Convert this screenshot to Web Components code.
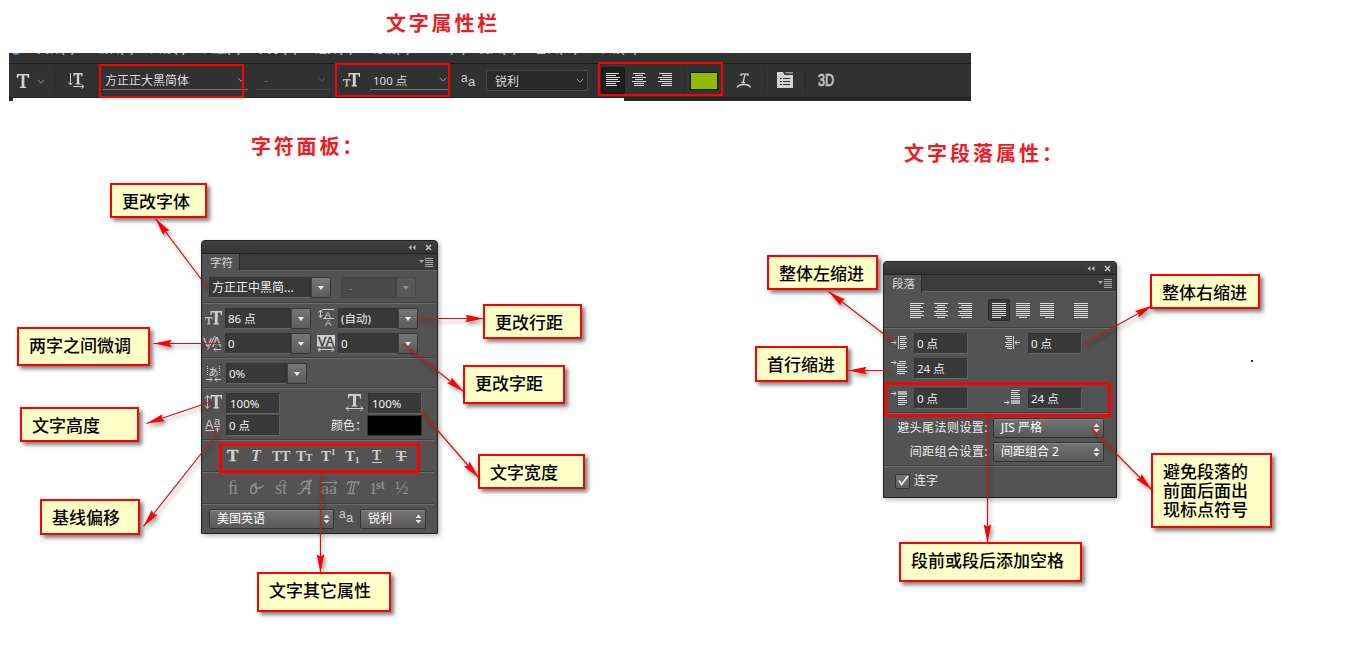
<!DOCTYPE html>
<html lang="zh-CN">
<head>
<meta charset="utf-8">
<title>文字属性</title>
<style>
html,body{margin:0;padding:0;background:#fff;overflow:hidden}
</style>
</head>
<body>
<type-guide></type-guide>
<script>
const SANS = '"Noto Sans","Noto Sans CJK SC",sans-serif';
const define = (name, render) => customElements.define(name, class extends HTMLElement {
  connectedCallback() {
    if (this.shadowRoot) return;
    this.attachShadow({ mode: 'open' }).innerHTML = render(this);
  }
});
const stripes = (x, y, rows, color) => rows.map(([a, b], i) =>
  `<rect x="${x + a}" y="${y + i * 2}" width="${b - a}" height="1" fill="${color || '#dcdcdc'}"/>`).join('');
const T = (x, y, size, extra) => `<text x="${x}" y="${y}" font-size="${size}" font-weight="bold" ${extra || ''}>T</text>`;
const left = [[0,14],[0,11],[0,13],[0,10],[0,14],[0,12],[0,14],[0,11]];
const center = [[0,14],[3,11],[1,13],[3,11],[0,14],[2,12],[0,14],[3,11]];
const right = left.map(([a, b]) => [14 - b, 14]);
const full = left.map(() => [0,14]);
const barLeft = [[0,13],[0,10],[0,14],[0,12],[0,14],[0,10],[0,11]];
const barCenter = [[1,13],[3,11],[0,14],[3,11],[0,14],[2,12],[2,12]];

/* name: [width, height, markup] */
const ICONS = {
  typeTool: [14, 18, `<path d="M.8 2H13.2V6H12L11 3.5H8.4V14.4L10.2 15V16H3.8V15L5.6 14.4V3.5H3L2 6H.8Z"/>`],
  chev: [8, 6, `<path d="M.7.8 4 4.2 7.3.8" fill="none" stroke="currentColor" stroke-width="1"/>`],
  orient: [18, 18, `<path d="M5.5 1H14.5V4.500H13.500L13 2.500H11.200V11.500H12.500V12.500H7.500V11.500H8.800V2.500H7L6.500 4.500H5.500Z"/><path d="M2.500 1V13M.5 10.5 2.5 13 4.500 10.500M5 14.500H16M13.500 12.500 16 14.500 13.500 16.500" fill="none" stroke="currentColor"/>`],
  size: [18, 18, `<path d="M5.500 1H17V5H16L15.500 2.500H12.700V13L14 13.600V14.500H8.500V13.600L9.800 13V2.500H7L6.500 5H5.500Z"/><path d="M0 7H7.500V9.200H6.800L6.400 8.200H4.600V13.500L5.400 13.900V14.500H2.100V13.900L2.900 13.500V8.200H1.100L.7 9.200H0Z" opacity=".85"/>`],
  aa: [15, 16, `<g font-family="Liberation Sans"><text x="0" y="9" font-size="12">a</text><text x="7" y="13" font-size="13">a</text></g>`],
  left: [15, 16, stripes(0, 0, left)],
  center: [15, 16, stripes(0, 0, center)],
  right: [15, 16, stripes(0, 0, right)],
  bl: [15, 14, stripes(0, 0, barLeft)],
  bc: [15, 14, stripes(0, 0, barCenter)],
  br: [15, 14, stripes(0, 0, barLeft.map(([a, b]) => [14 - b, 14]))],
  jl: [15, 16, stripes(0, 0, [...full.slice(0, 7), [0,9]])],
  jc: [15, 16, stripes(0, 0, [...full.slice(0, 7), [3,11]])],
  jr: [15, 16, stripes(0, 0, [...full.slice(0, 7), [5,14]])],
  jf: [15, 16, stripes(0, 0, full)],
  warp: [16, 18, `<path d="M5 2.200H12M5 1.500V4M12 1.500V4M9 2.200 7.200 10M5.500 10.500H9M1 15.500Q2.500 12.500 8 12.500T14.500 15.500" fill="none" stroke="currentColor" stroke-width="1.300"/>`],
  panels: [17, 17, `<path d="M0 0H6L7.500 3H16V16H0Z"/><path d="M8 0H16V1.500H8.700Z" fill="#999"/><path d="M3 6.500H5M6 6.500H13M3 9.500H5M6 9.500H13M3 12.500H5M6 12.500H13" stroke="#333"/>`],
  leading: [17, 19, `<g font-family="Liberation Sans"><text x="6.500" y="8.500" font-size="9.500">A</text><text x="7" y="17" font-size="9.500">A</text></g><path d="M2.500 1.500V8M.5 3.500 2.500 1 4.500 3.500M.5 6 2.500 8.500 4.500 6M4 .5H16M5 9.500H16" fill="none" stroke="currentColor"/>`],
  kern: [18, 18, `<g font-family="Liberation Sans"><text x="-1" y="11.500" font-size="13" textLength="9" lengthAdjust="spacingAndGlyphs">V</text><text x="8" y="12" font-size="14">A</text></g><path d="M3.500 15 11 1M17 14.500H10M12 12.500 10 14.500 12 16.500" fill="none" stroke="currentColor"/>`],
  track: [19, 18, `<rect width="18" height="11.500"/><text x="1" y="10.500" font-size="12.500" font-family="Liberation Sans" fill="#333" stroke="#333" stroke-width=".3" textLength="16">VA</text><path d="M1 14.500H17M3.500 12.300 1 14.500 3.500 17M14.500 12.300 17 14.500 14.500 17" fill="none" stroke="currentColor"/>`],
  tsume: [15, 18, `<text x="2.500" y="9.500" font-size="10" font-family="Noto Sans CJK JP">あ</text><path d="M1.500 0V10M13.500 0V10" stroke="currentColor" stroke-dasharray="1 1"/><path d="M0 13.500H6M4 11.500 6 13.500 4 15.500M15 13.500H9M11 11.500 9 13.500 11 15.500" fill="none" stroke="currentColor"/>`],
  vscale: [18, 18, `<path d="M5.500 1H17V5H16L15.500 2.500H12.700V13L14.200 13.600V14.500H8.300V13.600L9.800 13V2.500H7L6.500 5H5.500Z"/><path d="M2.500 2V14M0 4.500 2.500 1.500 5 4.500M0 11.500 2.500 14.500 5 11.500" fill="none" stroke="currentColor"/>`],
  hscale: [18, 18, `<path d="M3 0H16V4.500H15L14.500 2H11V11L12.500 11.600V12.500H6.500V11.600L8 11V2H4.500L4 4.500H3Z"/><path d="M1 14.500H18M3.500 12.300 1 14.500 3.500 17M15.500 12.300 18 14.500 15.500 17" fill="none" stroke="currentColor"/>`],
  base: [18, 18, `<g font-family="Liberation Sans"><text x="0" y="11" font-size="12.500">A</text><text x="9" y="7" font-size="11">a</text></g><path d="M0 12.500H9M9 8.500H15M12.500 15V10M10.500 12 12.500 10 14.500 12" fill="none" stroke="currentColor"/>`],
  inL: [17, 16, `<rect x="7" y="1" width="1" height="13"/>` + stripes(9, 1, [[0,6],[0,7],[0,5],[0,7],[0,6],[0,7],[0,5]]) + `<path d="M0 7.500H5M3 5.500 5 7.500 3 9.500" fill="none" stroke="currentColor"/>`],
  inR: [17, 16, `<rect x="9" y="1" width="1" height="13"/>` + stripes(1, 1, [[0,7],[1,7],[2,7],[0,7],[1,7],[0,7],[2,7]]) + `<path d="M16 7.500H11M13 5.500 11 7.500 13 9.500" fill="none" stroke="currentColor"/>`],
  first: [17, 16, stripes(6, 2, [[2,9],[0,9],[0,8],[0,10],[0,8],[0,10],[0,8]]) + `<path d="M0 3.500H5M3 1.500 5 3.500 3 5.500" fill="none" stroke="currentColor"/>`],
  before: [17, 16, `<rect x="7" y="1" width="9" height="4" opacity=".75"/>` + stripes(7, 6, [[0,9],[0,7],[0,9],[0,9],[0,7]]) + `<path d="M0 3.500H5M3 1.500 5 3.500 3 5.500" fill="none" stroke="currentColor"/>`],
  after: [17, 16, `<rect x="7" y="10" width="9" height="4" opacity=".75"/>` + stripes(7, 0, [[0,9],[0,7],[0,9],[0,9],[0,9]]) + `<path d="M0 12.500H5M3 10.500 5 12.500 3 14.500" fill="none" stroke="currentColor"/>`],
  b: [18, 18, T(3, 14, 17, 'stroke="currentColor" stroke-width=".4"')],
  i: [18, 18, T(3, 14, 16, 'font-style="italic"')],
  caps: [20, 18, T(1, 14, 14) + T(10, 14, 14)],
  smallcaps: [20, 18, T(1, 14, 15) + T(10.5, 14, 10.5)],
  sup: [18, 18, T(1, 14, 15) + `<text x="11" y="8" font-size="9" font-weight="bold">1</text>`],
  sub: [18, 18, T(1, 14, 15) + `<text x="11" y="16" font-size="9" font-weight="bold">1</text>`],
  under: [18, 18, T(4, 13, 14) + `<rect x="4" y="15" width="10" height="1"/>`],
  strike: [18, 18, T(4, 14, 15) + `<rect x="4" y="9" width="11" height="1"/>`],
  fi: [18, 20, `<text x="4" y="16" font-size="18">ﬁ</text>`],
  swash: [18, 20, `<path d="M9 6C3 5 1 14 4.500 15.500 9 16.500 10 8 6.500 7.500 7 12 14 10 15.500 7" fill="none" stroke="currentColor" stroke-width="1.500"/>`],
  st: [18, 20, `<text x="3" y="16" font-size="18">st</text><path d="M8 7C7 1 15 1 13 6" fill="none" stroke="currentColor"/>`],
  title: [20, 20, `<path d="M3 15C4 17 7 15 9 11L15 3 13.500 15.500 16 14.500M7.500 10.500H14M6 7C7 3 11 3 15 3H17" fill="none" stroke="currentColor" stroke-width="1.400"/>`],
  ord: [20, 20, `<text x="2" y="16" font-size="17" textLength="16" lengthAdjust="spacingAndGlyphs">aa</text><path d="M2 4.500H18M15.500 2.500 18 4.500 15.500 6.500" fill="none" stroke="currentColor"/>`],
  tt: [18, 20, `<path d="M4 4H15L14 7M4 4 3 7M8 4 5.500 15M11 4 8.500 15M3.500 15.500H11" fill="none" stroke="currentColor" stroke-width="1.300"/>`],
  st1: [19, 20, `<text x="1" y="16" font-size="17">1</text><text x="8" y="10.500" font-size="12" font-weight="bold">st</text>`],
  half: [18, 20, `<text x="3" y="15.500" font-size="18">½</text>`]
};

define('ps-icon', el => {
  const [w, h, body] = ICONS[el.getAttribute('name')];
  return `<style>:host{display:block;flex:none;width:${w}px;height:${h}px;color:var(--ink,#cfcfcf)}svg{display:block;overflow:visible}</style>
  <svg width="${w}" height="${h}" fill="currentColor" font-family="Liberation Serif">${body}</svg>`;
});

define('ps-field', el => {
  const btn = el.hasAttribute('drop');
  return `<style>
  :host{display:flex;flex:none;box-sizing:border-box;height:21px;font:11.5px ${SANS};color:#f2f2f2}
  :host([disabled]){color:#858585}
  .v{flex:1;box-sizing:border-box;border:1px solid #333;border-bottom-color:#666;background:#393939;padding-left:2px;line-height:19px;white-space:nowrap;overflow:hidden}
  :host(:not([drop])) .v{border-right-color:#626262;padding-left:var(--pad,3px)}
  :host([disabled]) .v{background:#4a4a4a;border-color:#404040;padding-left:7px}
  .b{width:20px;box-sizing:border-box;border:1px solid #363636;border-left-color:#404040;border-radius:0 2px 2px 0;background:linear-gradient(#777,#5c5c5c);display:flex;align-items:center;justify-content:center}
  :host([disabled]) .b{background:#5a5a5a;border-color:#454545;opacity:.8}
  .b i{border:3px solid transparent;border-top:4px solid #eee;border-bottom:0}
  :host([disabled]) i{border-top-color:#999}
  </style><div class="v"><slot></slot></div>${btn ? '<div class="b"><i></i></div>' : ''}`;
});

define('ps-select', () => `<style>
  :host{display:flex;flex:none;box-sizing:border-box;height:20px;border:1px solid #343434;border-radius:2px;background:linear-gradient(#747474,#595959);box-shadow:inset 0 1px #858585;font:12px/20px ${SANS};color:#fff;padding:0 3px 0 7px;align-items:center;justify-content:space-between;white-space:nowrap}
  </style><span><slot></slot></span><svg width="7" height="10" fill="#e4e4e4"><path d="M.5 4 3.500.5 6.500 4ZM.5 6H6.500L3.500 9.500Z"/></svg>`);

define('ps-panel', el => `<style>
  :host{display:flex;flex-direction:column;box-sizing:border-box;border:1px solid #222;border-radius:4px 4px 0 0;background:#535353;box-shadow:2px 2px 5px rgba(0,0,0,.28);overflow:hidden}
  header{height:13px;box-sizing:border-box;border-bottom:1px solid #232323;background:linear-gradient(#414141,#343434);display:flex;justify-content:flex-end;align-items:center;gap:9px;padding:1px 5px 0 0}
  nav{height:17px;background:#3b3b3b;border-bottom:1px solid #656565;box-sizing:border-box;display:flex;justify-content:space-between}
  b{background:#535353;border-right:1px solid #292929;height:17px;width:38px;box-sizing:border-box;padding-left:8px;font:11.5px/18px ${SANS};color:#d8d8d8;white-space:nowrap}
  nav svg{margin:4px 4px 0 0}
  </style><header><svg width="8" height="7" fill="#bbb"><path d="M3.500 1V6L.5 3.500ZM7.500 1V6L4.500 3.500Z"/></svg><svg width="7" height="7"><path d="M1 1 6 6M6 1 1 6" stroke="#c4c4c4" stroke-width="1.500"/></svg></header>
  <nav><b>${el.getAttribute('label')}</b><svg width="14" height="9"><path d="M0 2H5L2.500 5Z" fill="#aaa"/><path d="M6 .5H14M6 2.500H14M6 4.500H14M6 6.500H14M6 8.500H14" stroke="#aaa"/></svg></nav><slot></slot>`);

const ROWS = `
  :host{display:block;font:12px ${SANS};color:#ececec}
  .r{display:flex;box-sizing:border-box}
  hr{border:0;height:2px;background:linear-gradient(#404040 50%,#6c6c6c 50%);margin:0 3px 0 0}
  .a{align-items:center}`;

define('character-panel', () => `<style>${ROWS}
  ps-panel{height:294px}
  .glyphs{display:grid;grid-template-columns:repeat(8,24px);justify-items:center}
  .dim{--ink:#8f8f8f}
  .sw{width:55px;height:21px;background:#000;border:1px solid #333;box-sizing:border-box}
  </style><ps-panel label="字符">
  <div class="r" style="padding:6px 0 4px 7px;gap:10px"><ps-field drop style="width:122px;font-size:12px">方正正中黑简...</ps-field><ps-field drop disabled style="width:75px">-</ps-field></div>
  <hr>
  <div class="r" style="padding:4px 0 0 3px"><ps-icon name="size" style="margin-top:2px"></ps-icon><ps-field drop style="width:86px;margin-left:2px">86 点</ps-field><ps-icon name="leading" style="margin:1px 0 0 7px"></ps-icon><ps-field drop style="width:80px;margin-left:3px">(自动)</ps-field></div>
  <div class="r" style="padding:4px 0 3px 2px"><ps-icon name="kern" style="margin-top:2px"></ps-icon><ps-field drop style="width:86px;margin-left:3px">0</ps-field><ps-icon name="track" style="margin:2px 0 0 6px"></ps-icon><ps-field drop style="width:80px;margin-left:2px">0</ps-field></div>
  <hr>
  <div class="r" style="padding:4px 0 3px 4px"><ps-icon name="tsume" style="margin-top:3px"></ps-icon><ps-field drop style="width:81px;margin-left:5px">0%</ps-field></div>
  <hr>
  <div class="r" style="padding:4px 0 1px 3px"><ps-icon name="vscale" style="margin-top:1px"></ps-icon><ps-field style="width:54px;margin-left:3px">100%</ps-field><ps-icon name="hscale" style="margin:1px 0 0 65px"></ps-icon><ps-field style="width:54px;margin-left:5px">100%</ps-field></div>
  <div class="r" style="padding:0 0 3px 3px"><ps-icon name="base" style="margin-top:3px"></ps-icon><ps-field style="width:54px;margin-left:3px;--pad:2px">0 点</ps-field><span style="margin-left:51px;width:36px;line-height:21px;white-space:nowrap">颜色：</span><div class="sw"></div></div>
  <hr>
  <div class="r a glyphs" style="height:30px;padding-left:19px">${['b','i','caps','smallcaps','sup','sub','under','strike'].map(n => `<ps-icon name="${n}"></ps-icon>`).join('')}</div>
  <hr>
  <div class="r a glyphs dim" style="height:30px;padding-left:19px">${['fi','swash','st','title','ord','tt','st1','half'].map(n => `<ps-icon name="${n}"></ps-icon>`).join('')}</div>
  <hr>
  <div class="r" style="padding:4px 0 0 7px"><ps-select style="width:125px">美国英语</ps-select><ps-icon name="aa" style="margin:0 6px 0 5px"></ps-icon><ps-select style="width:66px">锐利</ps-select></div>
  </ps-panel>`);

define('paragraph-panel', () => `<style>${ROWS}
  ps-panel{height:237px}
  .on{width:22px;height:22px;box-sizing:border-box;background:#3a3a3a;border:1px solid #2c2c2c;border-radius:2px;padding:3px 0 0 3px;margin:0 6px 0 15px}
  .al{padding:7px 0 6px 26px}
  .al>ps-icon{margin-top:4px}
  .lab{width:104px;text-align:right;line-height:20px;white-space:nowrap;margin-right:5px;letter-spacing:.45px}
  .chk{width:15px;height:15px;box-sizing:border-box;border:1px solid #333;background:linear-gradient(#777,#606060);border-radius:2px;margin-right:4px}
  .chk svg{display:block;overflow:visible}
  </style><ps-panel label="段落">
  <div class="r al"><ps-icon name="left"></ps-icon><ps-icon name="center" style="margin-left:9px"></ps-icon><ps-icon name="right" style="margin-left:9px"></ps-icon><div class="on"><ps-icon name="jl"></ps-icon></div><ps-icon name="jc"></ps-icon><ps-icon name="jr" style="margin-left:9px"></ps-icon><ps-icon name="jf" style="margin-left:19px"></ps-icon></div>
  <hr>
  <div class="r" style="padding:4px 0 0 7px"><ps-icon name="inL" style="margin-top:2px"></ps-icon><ps-field style="width:54px;margin-left:6px;--pad:2px">0 点</ps-field><ps-icon name="inR" style="margin:2px 0 0 36px"></ps-icon><ps-field style="width:54px;margin-left:7px;--pad:2px">0 点</ps-field></div>
  <div class="r" style="padding:4px 0 3px 7px"><ps-icon name="first" style="margin-top:1px"></ps-icon><ps-field style="width:54px;margin-left:6px;--pad:2px">24 点</ps-field></div>
  <hr>
  <div class="r" style="padding:4px 0 3px 7px"><ps-icon name="before" style="margin-top:2px"></ps-icon><ps-field style="width:54px;margin-left:6px;--pad:2px">0 点</ps-field><ps-icon name="after" style="margin:2px 0 0 36px"></ps-icon><ps-field style="width:54px;margin-left:7px;--pad:2px">24 点</ps-field></div>
  <hr>
  <div class="r" style="padding:4px 0 0"><span class="lab">避头尾法则设置:</span><ps-select style="width:111px">JIS 严格</ps-select></div>
  <div class="r" style="padding:4px 0 3px"><span class="lab">间距组合设置:</span><ps-select style="width:111px">间距组合 2</ps-select></div>
  <hr>
  <div class="r a" style="padding:5px 0 0 11px"><div class="chk"><svg width="13" height="13"><path d="M3 5.500 5.500 9.500 12 1" fill="none" stroke="#eee" stroke-width="1.700"/></svg></div><span style="line-height:18px">连字</span></div>
  </ps-panel>`);

const MENU = [['文件(F)',37],['编辑(E)',96],['图像(I)',150],['图层(L)',203],['文字(Y)',259],['选择(S)',315],['滤镜(T)',372],['3D(D)',434],['视图(V)',478],['窗口(W)',535],['帮助(H)',597],['',660]];
define('options-bar', () => `<style>
  :host{display:block;font:12px ${SANS};color:#dcdcdc;--ink:#d2d2d2}
  .menu{height:10px;background:#323232;border-bottom:1px solid #1f1f1f;overflow:hidden;display:flex;padding-left:3px}
  .dot{width:8px;height:8px;border-radius:4px;background:#5b9bd5;margin:-6px 17px 0 0;flex:none}
  .menu span{line-height:16px;height:16px;margin-top:-12px;flex:none;white-space:nowrap}
  .bar{height:33px;background:#323232;border-bottom:1px solid #222;display:flex;align-items:center}
  .bar>*{flex:none}
  .s{width:1px;height:25px;background:#292929}
  .u{box-sizing:border-box;height:19px;margin-bottom:0;display:flex;align-items:center;justify-content:space-between;border-bottom:1px solid #777;white-space:nowrap}
  .u ps-icon{--ink:#999}
  .on{width:24px;height:27px;box-sizing:border-box;border:1px solid #191919;background:#1e1e1e;border-radius:2px;display:flex;padding:5px 0 0 4px}
  .dd{box-sizing:border-box;width:102px;height:21px;border:1px solid #4a4a4a;background:#292929;border-radius:2px;display:flex;align-items:center;justify-content:space-between;padding:0 3px 0 8px}
  .sw{width:28px;height:18px;box-sizing:border-box;border:1px solid #161616;background:#8fbe00}
  .foot{height:3px;display:flex;justify-content:space-between}
  .foot i{background:#262626}
  </style>
  <div class="menu"><div class="dot"></div>${MENU.slice(0, -1).map(([t, x], k) => `<span style="width:${MENU[k + 1][1] - x}px">${t}</span>`).join('')}</div>
  <div class="bar">
  <ps-icon name="typeTool" style="margin-left:7px"></ps-icon><ps-icon name="chev" style="margin:2px 9px 0 7px;--ink:#999"></ps-icon><div class="s"></div>
  <ps-icon name="orient" style="margin-left:13px"></ps-icon><div class="s" style="margin-left:11px"></div>
  <div class="u" style="width:145px;margin-left:5px;padding:0 3px 0 2px">方正正大黑简体<ps-icon name="chev"></ps-icon></div>
  <div class="u" style="width:75px;margin-left:8px;padding:0 5px 0 8px;border-color:#444;color:#666">-<ps-icon name="chev" style="--ink:#555"></ps-icon></div>
  <ps-icon name="size" style="margin-left:12px"></ps-icon>
  <div class="u" style="width:78px;margin-left:9px;padding:0 1px 0 3px;font-size:11.500px">100 点<ps-icon name="chev"></ps-icon></div>
  <ps-icon name="aa" style="margin-left:13px"></ps-icon>
  <div class="dd" style="margin-left:10px">锐利<ps-icon name="chev" style="--ink:#999"></ps-icon></div><div class="s" style="margin-left:5px"></div>
  <div class="on" style="margin-left:7px"><ps-icon name="bl"></ps-icon></div><ps-icon name="bc" style="margin:-1px 0 0 7px"></ps-icon><ps-icon name="br" style="margin:-1px 0 0 11px"></ps-icon>
  <div class="s" style="margin-left:11px"></div><div class="sw" style="margin-left:5px"></div>
  <ps-icon name="warp" style="margin-left:18px"></ps-icon><div class="s" style="margin-left:12px"></div>
  <ps-icon name="panels" style="margin-left:12px"></ps-icon><div class="s" style="margin-left:11px"></div>
  <svg width="17" height="18" style="display:block;margin:-2px 0 0 12px"><text x="0" y="15" font-size="17" font-family="Liberation Sans" fill="#c8c8c8" stroke="#c8c8c8" stroke-width=".7" textLength="16" lengthAdjust="spacingAndGlyphs">3D</text></svg>
  </div><div class="foot"><i style="width:4px"></i><i style="width:347px"></i></div>`);

define('section-title', () => `<style>:host{display:block;font:bold 20px/28px "Noto Sans CJK SC",sans-serif;letter-spacing:2.8px;color:#ed1c24;white-space:nowrap}</style><slot></slot>`);

define('call-out', () => `<style>:host{display:block;box-sizing:border-box;border:2px solid #f00;background:#ffffc8;box-shadow:3px 3px 4px rgba(0,0,0,.5);padding:6px 0 0 10px;font:500 17px/19px "Noto Sans CJK SC",sans-serif;color:#000;white-space:nowrap}</style><slot></slot>`);

define('pointer-layer', el => {
  const lines = JSON.parse(el.getAttribute('lines'));
  return `<style>:host{display:block;pointer-events:none}svg{display:block;filter:drop-shadow(2px 3px 2px rgba(0,0,0,.4))}</style>
  <svg width="1355" height="665">${lines.map(([x1, y1, x2, y2]) => {
    const a = Math.atan2(y2 - y1, x2 - x1) * 180 / Math.PI;
    return `<line x1="${x1 + .5}" y1="${y1 + .5}" x2="${x2 + .5}" y2="${y2 + .5}" stroke="#d21414" stroke-width="1.200"/><path transform="translate(${x2 + .5} ${y2 + .5}) rotate(${a})" d="M0 0-18-3.800-16 0-18 3.800Z" fill="#f00"/>`;
  }).join('')}</svg>`;
});

const NOTES = [
  ['更改字体',110,183,97,35],['两字之间微调',17,327,133,39],['文字高度',20,407,119,35],['基线偏移',40,499,100,36],
  ['更改行距',483,304,99,35],['更改字距',463,365,102,39],['文字宽度',478,454,107,35],['文字其它属性',257,572,134,40],
  ['整体左缩进',767,255,111,35],['首行缩进',755,346,93,36],['整体右缩进',1150,274,110,35],
  ['避免段落的<br>前面后面出<br>现标点符号',1151,453,121,75],['段前或段后添加空格',899,542,183,40]];
const FRAMES = [[99,64,145,34,2],[335,63,115,34,2],[598,62,125,34,2],[219,443,201,30,3],[884,382,227,35,3]];
const LINES = [[207,287,155,218],[220,343,153,343],[211,401,146,423],[219,430,143,526],[417,318,483,318],[402,343,463,391],[419,409,478,477],[320,473,320,572],[893,341,828,291],[890,370,848,370],[1084,343,1152,305],[987,413,987,542],[1091,428,1151,489]];

define('type-guide', () => `<style>
  :host{display:block;position:relative;width:1355px;height:665px;background:#fff;overflow:hidden}
  options-bar,section-title,character-panel,paragraph-panel,call-out,pointer-layer,.f,.dot{position:absolute}
  .f{box-sizing:border-box;border:solid #f00}
  .dot{left:1251px;top:360px;width:2px;height:2px;background:#333}
  </style>
  <options-bar style="left:9px;top:53px;width:962px"></options-bar>
  <section-title style="left:386px;top:9px">文字属性栏</section-title>
  <section-title style="left:251px;top:132px">字符面板：</section-title>
  <section-title style="left:904px;top:139px;letter-spacing:3px">文字段落属性：</section-title>
  <character-panel style="left:201px;top:240px;width:237px"></character-panel>
  <paragraph-panel style="left:883px;top:261px;width:234px"></paragraph-panel>
  ${FRAMES.map(([x, y, w, h, b]) => `<div class="f" style="left:${x}px;top:${y}px;width:${w}px;height:${h}px;border-width:${b}px"></div>`).join('')}
  ${NOTES.map(([t, x, y, w, h]) => `<call-out style="left:${x}px;top:${y}px;width:${w}px;height:${h}px">${t}</call-out>`).join('')}
  <pointer-layer style="left:0;top:0" lines="${JSON.stringify(LINES)}"></pointer-layer>
  <div class="dot"></div>`);
</script>
</body>
</html>
